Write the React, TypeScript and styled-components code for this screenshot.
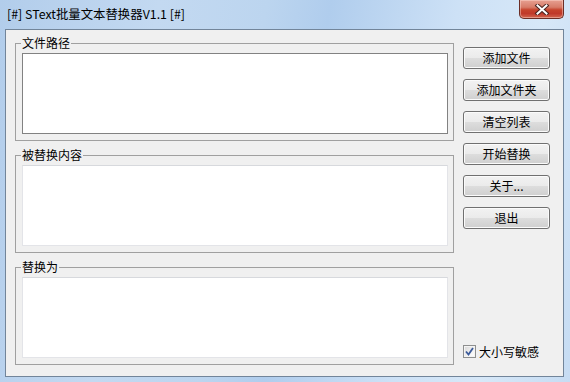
import React from 'react';
import styled, { createGlobalStyle } from 'styled-components';

const Global = createGlobalStyle`
  html, body { margin: 0; padding: 0; }
  body {
    width: 570px;
    height: 382px;
    overflow: hidden;
    font-family: "Noto Sans CJK SC", "Noto Sans", sans-serif;
  }
`;

const Window = styled.div`
  width: 570px;
  height: 382px;
  box-sizing: border-box;
  display: flex;
  flex-direction: column;
  padding: 0 6px 5px 5px;
  background: linear-gradient(100deg, #b2cdeb 0%, #c3d9f1 25%, #bcd5ef 42%, #b0cded 52%, #cde1f6 72%, #d7e8f8 86%, #c6dcf3 100%);
`;

const TitleBar = styled.div`
  height: 29px;
  flex: none;
  display: flex;
  justify-content: space-between;
  align-items: flex-start;
`;

const Title = styled.div`
  padding: 8px 0 0 2px;
  font-size: 12.4px;
  line-height: 12px;
  color: #000;
  white-space: nowrap;
`;

const CloseButton = styled.div`
  width: 45px;
  height: 19px;
  box-sizing: border-box;
  border: 1px solid #6b2e26;
  border-top: none;
  border-radius: 0 0 5px 5px;
  background: linear-gradient(#e7a091 0%, #d77c69 40%, #c6432c 55%, #c0392a 75%, #d2664f 100%);
  box-shadow: inset 0 0 0 1px rgba(255, 220, 210, 0.45);
  display: flex;
  align-items: center;
  justify-content: center;
`;

const Client = styled.div`
  flex: 1;
  display: flex;
  gap: 9px;
  padding: 7px 13px 0 9px;
  border: 1px solid #72859a;
  background: #f0f0f0;
  min-height: 0;
`;

const LeftColumn = styled.div`
  width: 439px;
  flex: none;
  display: flex;
  flex-direction: column;
  gap: 8px;
`;

const Group = styled.fieldset`
  margin: 0;
  padding: 4px 5px 6px 6px;
  border: 1px solid #a0a0a0;
  min-width: 0;
`;

const Legend = styled.legend`
  font-size: 12px;
  line-height: 12px;
  padding: 0 1px;
  margin-left: -1px;
  color: #000;
`;

const TextBox = styled.textarea<{ $list?: boolean }>`
  display: block;
  width: 100%;
  height: 81px;
  box-sizing: border-box;
  margin: 0;
  padding: 2px;
  resize: none;
  outline: none;
  background: #fff;
  font: 12px "Noto Sans CJK SC", sans-serif;
  border: 1px solid ${p => (p.$list ? '#828282' : '#e3e4e8')};
  border-top-color: ${p => (p.$list ? '#828282' : '#d7d9dd')};
`;

const RightColumn = styled.div`
  width: 87px;
  flex: none;
  display: flex;
  flex-direction: column;
  gap: 10px;
  padding-top: 10px;
`;

const Button = styled.button`
  height: 22px;
  width: 100%;
  box-sizing: border-box;
  padding: 0;
  border: 1px solid #707070;
  border-radius: 3px;
  background: linear-gradient(#f2f2f2 0%, #ebebeb 48%, #dddddd 52%, #cfcfcf 100%);
  box-shadow: inset 0 0 0 1px #fbfbfb;
  font: 12px "Noto Sans CJK SC", sans-serif;
  line-height: 12px;
  color: #000;
`;

const CheckRow = styled.label`
  margin-top: auto;
  margin-bottom: 18px;
  display: flex;
  align-items: center;
  gap: 3px;
  font-size: 12px;
  line-height: 13px;
  color: #000;
  white-space: nowrap;
`;

const CheckBox = styled.span`
  width: 13px;
  height: 13px;
  box-sizing: border-box;
  border: 1px solid #8e8f8f;
  background: linear-gradient(135deg, #d6d6d6 0%, #f3f3f3 60%, #ffffff 100%);
  box-shadow: inset 0 0 0 1px #f4f4f4;
  display: flex;
  align-items: center;
  justify-content: center;
  flex: none;
`;

const buttons = ['添加文件', '添加文件夹', '清空列表', '开始替换', '关于...', '退出'];

export default function App() {
  return (
    <>
      <Global />
      <Window>
        <TitleBar>
          <Title>[#] SText批量文本替换器V1.1 [#]</Title>
          <CloseButton>
            <svg width="16" height="11" viewBox="0 0 16 11">
              <path d="M3.5 1.5 L12.5 9.5 M12.5 1.5 L3.5 9.5" stroke="#4a2420" strokeWidth="4" strokeLinecap="square" />
              <path d="M3.5 1.5 L12.5 9.5 M12.5 1.5 L3.5 9.5" stroke="#ffffff" strokeWidth="2" strokeLinecap="square" />
            </svg>
          </CloseButton>
        </TitleBar>
        <Client>
          <LeftColumn>
            <Group>
              <Legend>文件路径</Legend>
              <TextBox $list readOnly />
            </Group>
            <Group>
              <Legend>被替换内容</Legend>
              <TextBox />
            </Group>
            <Group>
              <Legend>替换为</Legend>
              <TextBox />
            </Group>
          </LeftColumn>
          <RightColumn>
            {buttons.map(b => (
              <Button key={b}>{b}</Button>
            ))}
            <CheckRow>
              <CheckBox>
                <svg width="9" height="9" viewBox="0 0 9 9">
                  <path d="M1 4.5 L3.5 7.5 L8 1" stroke="#3b5a9a" strokeWidth="1.8" fill="none" />
                </svg>
              </CheckBox>
              大小写敏感
            </CheckRow>
          </RightColumn>
        </Client>
      </Window>
    </>
  );
}
